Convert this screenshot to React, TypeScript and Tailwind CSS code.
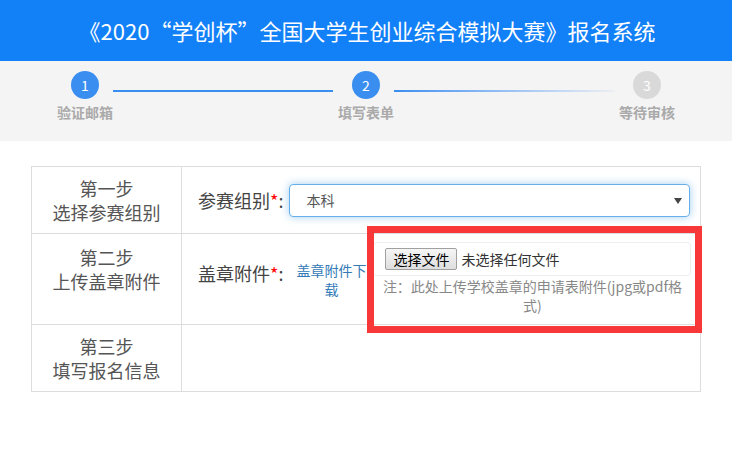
const STEPS = [
  { n: '1', label: '验证邮箱', done: true },
  { n: '2', label: '填写表单', done: true },
  { n: '3', label: '等待审核', done: false },
];

function Circle({ n, done }: { n: string; done: boolean }) {
  return (
    <div
      className={`w-[28px] h-[28px] rounded-full flex items-center justify-center text-[14px] text-white shrink-0 ${
        done ? 'bg-[#3a8ef0]' : 'bg-[#d9d9d9]'
      }`}
    >
      {n}
    </div>
  );
}

function Stepper() {
  return (
    <div className="h-[80px] bg-[#f4f4f4] pt-[10px]">
      <div className="flex items-center pl-[71px]">
        <Circle n={STEPS[0].n} done={STEPS[0].done} />
        <div className="ml-[14px] mt-[12px] w-[220px] h-[2px] bg-[#3a8ef0]" />
        <div className="ml-[19px]">
          <Circle n={STEPS[1].n} done={STEPS[1].done} />
        </div>
        <div className="ml-[14px] mt-[12px] w-[220px] h-[2px] bg-gradient-to-r from-[#3a8ef0] to-[#eceef2]" />
        <div className="ml-[19px]">
          <Circle n={STEPS[2].n} done={STEPS[2].done} />
        </div>
      </div>
      <div className="flex pl-[45px] mt-[3px] text-[14px] leading-[20px] font-bold text-[#aaaaaa]">
        <div className="w-[80px] text-center">{STEPS[0].label}</div>
        <div className="w-[80px] ml-[201px] text-center">{STEPS[1].label}</div>
        <div className="w-[80px] ml-[201px] text-center">{STEPS[2].label}</div>
      </div>
    </div>
  );
}

function Label({ text }: { text: string }) {
  return (
    <span className="text-[18px] leading-[24px] text-[#444] whitespace-nowrap">
      {text}
      <span className="text-[#ff0000]">*</span>:
    </span>
  );
}

function StepCell({ a, b, pt }: { a: string; b: string; pt: string }) {
  return (
    <div className={`w-[150px] shrink-0 border-r border-[#dddddd] text-center text-[18px] leading-[24px] text-[#555] ${pt}`}>
      <div>{a}</div>
      <div>{b}</div>
    </div>
  );
}

export default function App() {
  return (
    <div className="w-[732px] h-[450px] bg-white overflow-hidden font-['Noto_Sans_CJK_SC','Noto_Sans',sans-serif]">
      <div className="h-[61px] bg-[#1280f7] flex items-center justify-center pl-[2px] text-white text-[22px] whitespace-nowrap">
        《2020“学创杯”全国大学生创业综合模拟大赛》报名系统
      </div>
      <Stepper />

      <div className="relative mt-[25px] ml-[31px] w-[670px] border border-[#dddddd]">
        {/* row 1 */}
        <div className="flex h-[67px] border-b border-[#dddddd]">
          <StepCell a="第一步" b="选择参赛组别" pt="pt-[9px]" />
          <div className="flex items-center pl-[16px]">
            <Label text="参赛组别" />
            <div className="relative ml-[6px] w-[401px] h-[33px] flex items-center pl-[16px] border border-[#66afe9] rounded-[4px] shadow-[0_0_8px_rgba(102,175,233,0.6)] text-[14px] text-[#555]">
              本科
              <svg className="absolute right-[7px] top-[13px]" width="8" height="6" viewBox="0 0 8 6">
                <path d="M0 0 L8 0 L4 6 Z" fill="#444" />
              </svg>
            </div>
          </div>
        </div>

        {/* row 2 */}
        <div className="flex h-[91px] border-b border-[#dddddd]">
          <StepCell a="第二步" b="上传盖章附件" pt="pt-[11px]" />
          <div className="flex items-start pl-[16px]">
            <div className="mt-[27px]">
              <Label text="盖章附件" />
            </div>
            <a className="mt-[27px] ml-[13px] w-[70px] shrink-0 text-center text-[14px] leading-[19px] text-[#337ab7]">
              盖章附件下载
            </a>
            <div className="ml-[7px] mt-[8px] w-[318px] shrink-0">
              <div className="h-[34px] flex items-center pl-[11px] border border-[#eeeeee] rounded-[4px]">
                <button className="h-[22px] px-[7px] border border-[#a0a0a0] rounded-[2px] bg-gradient-to-b from-[#f6f6f6] to-[#dedede] text-[14px] leading-[18px] text-black">
                  选择文件
                </button>
                <span className="ml-[4px] text-[14px] text-[#333]">未选择任何文件</span>
              </div>
              <p className="mt-[1px] px-[6px] text-center text-[14px] leading-[19px] text-[#888]">
                注：此处上传学校盖章的申请表附件(jpg或pdf格式)
              </p>
            </div>
          </div>
        </div>

        {/* row 3 */}
        <div className="flex h-[66px]">
          <StepCell a="第三步" b="填写报名信息" pt="pt-[9px]" />
          <div className="flex-1" />
        </div>

        {/* highlight box */}
        <div className="absolute left-[335px] top-[59px] w-[335px] h-[107px] border-[7px] border-[#f83838] pointer-events-none" />
      </div>
    </div>
  );
}
